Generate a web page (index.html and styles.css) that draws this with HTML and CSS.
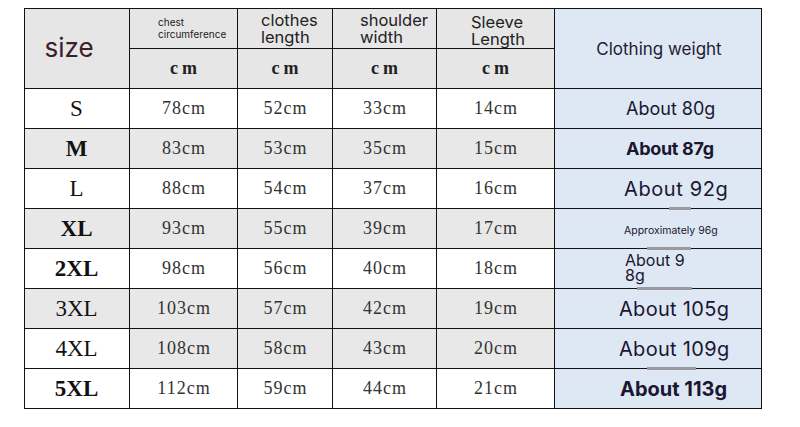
FILE: index.html
```html
<!DOCTYPE html>
<html lang="en">
<head>
<meta charset="utf-8">
<title>Size chart</title>
<link rel="stylesheet" href="styles.css">
</head>
<body>
<div class="chart">
  <div class="cell head size-head">size</div>
  <div class="cell head label chest-label"><span>chest<br>circumference</span></div>
  <div class="cell head label big-label len-label"><span>clothes<br>length</span></div>
  <div class="cell head label big-label sh-label"><span>shoulder<br>width</span></div>
  <div class="cell head label big-label sl-label"><span>Sleeve<br>Length</span></div>
  <div class="cell weight-head">Clothing weight</div>
  <div class="cell head unit">cm</div>
  <div class="cell head unit">cm</div>
  <div class="cell head unit">cm</div>
  <div class="cell head unit">cm</div>

  <div class="cell sz">S</div>
  <div class="cell num">78cm</div><div class="cell num">52cm</div><div class="cell num">33cm</div><div class="cell num">14cm</div>
  <div class="cell w w-80">About 80g</div>

  <div class="cell sz alt bold">M</div>
  <div class="cell num alt">83cm</div><div class="cell num alt">53cm</div><div class="cell num alt">35cm</div><div class="cell num alt">15cm</div>
  <div class="cell w w-87">About 87g</div>

  <div class="cell sz">L</div>
  <div class="cell num">88cm</div><div class="cell num">54cm</div><div class="cell num">37cm</div><div class="cell num">16cm</div>
  <div class="cell w w-92">About 92g</div>

  <div class="cell sz alt bold">XL</div>
  <div class="cell num alt">93cm</div><div class="cell num alt">55cm</div><div class="cell num alt">39cm</div><div class="cell num alt">17cm</div>
  <div class="cell w w-96"><span class="smudge smudge-1"></span>Approximately 96g</div>

  <div class="cell sz bold">2XL</div>
  <div class="cell num">98cm</div><div class="cell num">56cm</div><div class="cell num">40cm</div><div class="cell num">18cm</div>
  <div class="cell w w-98"><span class="smudge smudge-2"></span>About 9<br>8g</div>

  <div class="cell sz alt">3XL</div>
  <div class="cell num alt">103cm</div><div class="cell num alt">57cm</div><div class="cell num alt">42cm</div><div class="cell num alt">19cm</div>
  <div class="cell w w-105"><span class="smudge smudge-3"></span>About 105g</div>

  <div class="cell sz">4XL</div>
  <div class="cell num alt">108cm</div><div class="cell num alt">58cm</div><div class="cell num alt">43cm</div><div class="cell num alt">20cm</div>
  <div class="cell w w-105">About 109g</div>

  <div class="cell sz bold">5XL</div>
  <div class="cell num">112cm</div><div class="cell num">59cm</div><div class="cell num">44cm</div><div class="cell num">21cm</div>
  <div class="cell w w-113"><span class="smudge smudge-4"></span>About 113g</div>
</div>
</body>
</html>
```
FILE: styles.css
```css
html, body {
  margin: 0;
  padding: 0;
  background: #ffffff;
}

body {
  padding: 8px 0 0 24px;
}

.chart {
  display: grid;
  grid-template-columns: 104px 107px 94px 103px 117px 206px;
  grid-template-rows: repeat(10, 39px);
  gap: 1px;
  padding: 1px;
  width: max-content;
  background: #111111;
}

.cell {
  position: relative;
  display: flex;
  align-items: center;
  justify-content: center;
  background: #ffffff;
}

.head {
  background: #e6e6e6;
}

.alt {
  background: #e8e8e8;
}

.size-head {
  grid-row: 1 / span 2;
  font-family: "Inter", "Noto Sans", sans-serif;
  font-size: 26px;
  color: #3a2029;
  padding-right: 16px;
  padding-bottom: 2px;
}

.label {
  justify-content: flex-start;
  align-items: flex-start;
  font-family: "Inter", "Noto Sans", sans-serif;
  color: #222222;
}

.chest-label {
  font-size: 10px;
  line-height: 12px;
  padding: 7px 0 0 28px;
}

.big-label {
  font-size: 16.5px;
  line-height: 17px;
  padding-top: 3px;
}

.len-label {
  padding-left: 23px;
}

.sh-label {
  padding-left: 27px;
}

.sl-label {
  padding-left: 34px;
  padding-top: 5px;
}

.weight-head {
  grid-row: 1 / span 2;
  grid-column: 6;
  background: #dde8f4;
  font-family: "Inter", "Noto Sans", sans-serif;
  font-size: 17px;
  color: #1f1b35;
  padding-left: 2px;
}

.unit {
  font-family: "Liberation Serif", serif;
  font-weight: bold;
  font-size: 18px;
  letter-spacing: 4px;
  padding-left: 4px;
  color: #222222;
}

.sz {
  font-family: "Liberation Serif", serif;
  font-size: 23px;
  color: #111111;
  padding-right: 1px;
}

.bold {
  font-weight: bold;
}

.num {
  font-family: "Liberation Serif", serif;
  font-size: 18px;
  letter-spacing: 1px;
  color: #333333;
  padding-left: 1px;
}

.w {
  background: #dde8f4;
  justify-content: flex-start;
  font-family: "Inter", "Noto Sans", sans-serif;
  color: #1b1631;
}

.w-80 {
  font-size: 18px;
  padding-left: 71px;
}

.w-87 {
  font-size: 18px;
  font-weight: bold;
  padding-left: 71px;
  letter-spacing: -0.3px;
}

.w-92 {
  font-size: 20px;
  letter-spacing: 0.6px;
  padding-left: 69px;
}

.w-96 {
  font-size: 10.5px;
  padding-left: 69px;
  padding-top: 3px;
}

.w-98 {
  font-size: 16px;
  line-height: 15px;
  padding-left: 70px;
  align-items: center;
  padding-bottom: 2px;
}

.w-105 {
  font-size: 20px;
  letter-spacing: 0.3px;
  padding-left: 64px;
}

.w-113 {
  font-size: 20px;
  font-weight: bold;
  padding-left: 65px;
}

.smudge {
  position: absolute;
  top: -2px;
  height: 3px;
  background: #9a9aa0;
  z-index: 1;
}

.smudge-1 {
  left: 114px;
  width: 22px;
}

.smudge-2 {
  left: 92px;
  width: 44px;
}

.smudge-3 {
  left: 82px;
  width: 55px;
}

.smudge-4 {
  left: 92px;
  width: 49px;
}
```
